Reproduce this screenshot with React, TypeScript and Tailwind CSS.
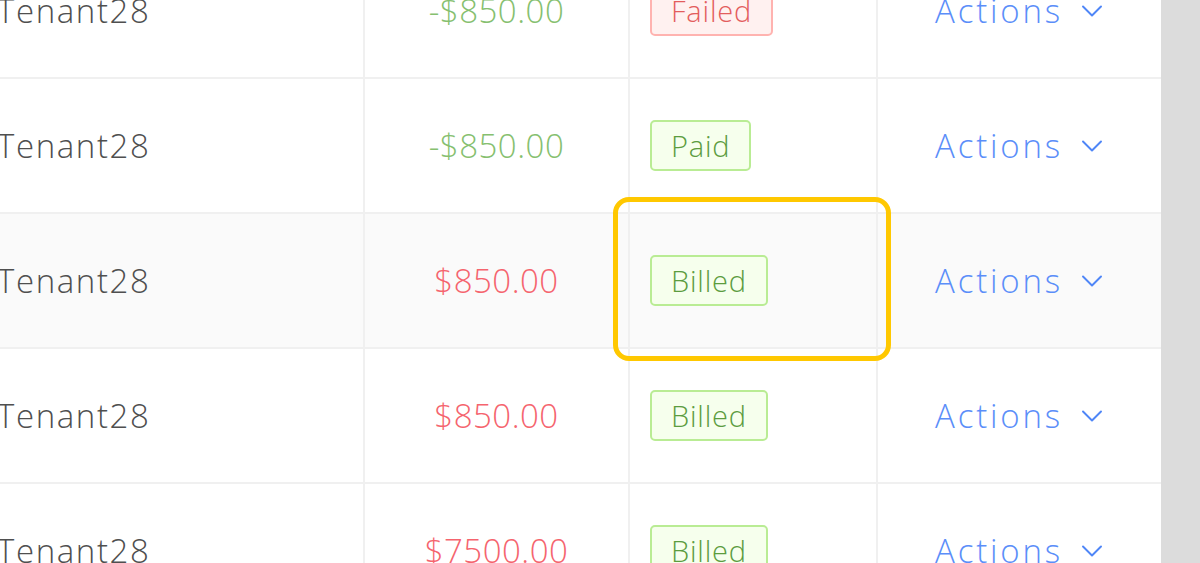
import { ChevronDown } from 'lucide-react';

type Row = {
  tenant: string;
  amount: string;
  credit: boolean;
  status: 'Failed' | 'Paid' | 'Billed';
  hover?: boolean;
};

const rows: Row[] = [
  { tenant: 'Tenant28', amount: '-$850.00', credit: true, status: 'Failed' },
  { tenant: 'Tenant28', amount: '-$850.00', credit: true, status: 'Paid' },
  { tenant: 'Tenant28', amount: '$850.00', credit: false, status: 'Billed', hover: true },
  { tenant: 'Tenant28', amount: '$850.00', credit: false, status: 'Billed' },
  { tenant: 'Tenant28', amount: '$7500.00', credit: false, status: 'Billed' },
];

const StatusTag = ({ status }: { status: Row['status'] }) => {
  const failed = status === 'Failed';
  return (
    <span
      className={
        failed
          ? 'inline-flex h-[51px] items-center rounded-[5px] border-2 border-[#ffb3b0] bg-[#fff1f0] px-[19px] text-[29px] tracking-[0.8px] text-[#e35d5d]'
          : 'inline-flex h-[51px] items-center rounded-[5px] border-2 border-[#b9ec94] bg-[#f6ffed] px-[19px] text-[29px] tracking-[0.8px] text-[#5c9c3f]'
      }
    >
      {status}
    </span>
  );
};

export default function App() {
  return (
    <div
      className="relative flex h-[563px] w-[1200px] overflow-hidden bg-white font-light"
      style={{ fontFamily: '"Open Sans", "DejaVu Sans", sans-serif' }}
    >
      {/* Table */}
      <div className="mt-[-56px] w-[1161px] shrink-0">
        {rows.map((r, i) => (
          <div
            key={i}
            className={`grid h-[135px] grid-cols-[363px_265px_248px_285px] border-b-2 border-[#f0f0f0] ${
              r.hover ? 'bg-[#fafafa]' : 'bg-white'
            }`}
          >
            <div className="flex items-center">
              <span className="-ml-[3px] text-[33px] tracking-[1.6px] text-[#4f4f4f]">{r.tenant}</span>
            </div>
            <div className="flex items-center justify-center border-l-2 border-[#f0f0f0]">
              <span
                className={`text-[33px] tracking-[0.5px] ${r.credit ? 'text-[#86c06f]' : 'text-[#f5646e]'}`}
              >
                {r.amount}
              </span>
            </div>
            <div className="flex items-center border-l-2 border-[#f0f0f0] pl-[20px]">
              <StatusTag status={r.status} />
            </div>
            <div className="flex items-center justify-center gap-[11px] border-l-2 border-[#f0f0f0] pl-[6px]">
              <span className="text-[33px] tracking-[2.8px] text-[#5b8ef9]">Actions</span>
              <ChevronDown className="h-[36px] w-[36px] text-[#4f86f7]" strokeWidth={1.3} />
            </div>
          </div>
        ))}
      </div>

      {/* Scrollbar track */}
      <div className="h-full flex-1 bg-[#dcdcdc]" />

      {/* Highlight box */}
      <div className="pointer-events-none absolute left-[613px] top-[197px] h-[164px] w-[278px] rounded-[16px] border-[5px] border-[#ffc800]" />
    </div>
  );
}
